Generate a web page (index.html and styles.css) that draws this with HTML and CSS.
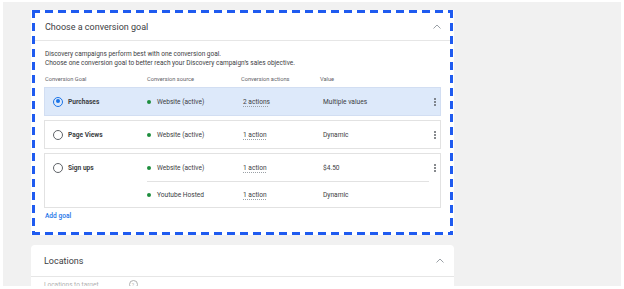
FILE: index.html
```html
<!DOCTYPE html>
<html>
<head>
<meta charset="utf-8">
<link rel="stylesheet" href="styles.css">
</head>
<body>
<div class="frame">
  <section class="card goal-card">
    <header class="card-head">
      <span class="card-title">Choose a conversion goal</span>
      <svg class="chev" width="8" height="5" viewBox="0 0 8 5"><path d="M0.5 4.5 L4 1 L7.5 4.5" fill="none" stroke="#9aa0a6" stroke-width="1"/></svg>
    </header>
    <div class="card-body">
      <p class="desc">Discovery campaigns perform best with one conversion goal.<br>Choose one conversion goal to better reach your Discovery campaign’s sales objective.</p>
      <div class="cols">
        <span class="c-goal">Conversion Goal</span>
        <span class="c-src">Conversion source</span>
        <span class="c-act">Conversion actions</span>
        <span class="c-val">Value</span>
      </div>
      <div class="rows">
        <div class="row selected">
          <div class="goal"><span class="radio on"></span><span class="gname">Purchases</span></div>
          <div class="subs">
            <div class="sub"><span class="src"><i class="dot"></i>Website (active)</span><span class="act"><u>2 actions</u></span><span class="val">Multiple values</span></div>
          </div>
          <div class="kebab"><i></i><i></i><i></i></div>
        </div>
        <div class="row">
          <div class="goal"><span class="radio"></span><span class="gname">Page Views</span></div>
          <div class="subs">
            <div class="sub"><span class="src"><i class="dot"></i>Website (active)</span><span class="act"><u>1 action</u></span><span class="val">Dynamic</span></div>
          </div>
          <div class="kebab"><i></i><i></i><i></i></div>
        </div>
        <div class="row">
          <div class="goal"><span class="radio"></span><span class="gname">Sign ups</span></div>
          <div class="subs">
            <div class="sub"><span class="src"><i class="dot"></i>Website (active)</span><span class="act"><u>1 action</u></span><span class="val">$4.50</span></div>
            <div class="sub"><span class="src"><i class="dot"></i>Youtube Hosted</span><span class="act"><u>1 action</u></span><span class="val">Dynamic</span></div>
          </div>
          <div class="kebab"><i></i><i></i><i></i></div>
        </div>
      </div>
      <a class="add">Add goal</a>
    </div>
  </section>
  <section class="card loc-card">
    <header class="card-head loc-head">
      <span class="card-title">Locations</span>
      <svg class="chev" width="8" height="5" viewBox="0 0 8 5"><path d="M0.5 4.5 L4 1 L7.5 4.5" fill="none" stroke="#9aa0a6" stroke-width="1"/></svg>
    </header>
    <div class="loc-body"><span>Locations to target</span><span class="help">?</span></div>
  </section>
</div>
</body>
</html>
```
FILE: styles.css
```css
html, body { margin: 0; padding: 0; background: #fff; }
body { font-family: Roboto, "Liberation Sans", sans-serif; color: #3c4043; }
.frame {
  margin: 2px 3px 0;
  width: 618px;
  height: 284px;
  box-sizing: border-box;
  padding: 8px 0 0 28px;
  background: #f1f1f1;
  overflow: hidden;
}
.card { width: 423px; background: #fff; box-sizing: border-box; }
.goal-card { position: relative; border: 3px solid #fff; }
.goal-card::before {
  content: "";
  position: absolute;
  inset: -3px -2px -3px -2px;
  pointer-events: none;
  background:
    repeating-linear-gradient(90deg, #1f5bf0 0 8px, transparent 8px 13px) left top / 100% 3px no-repeat,
    repeating-linear-gradient(90deg, #1f5bf0 0 8px, transparent 8px 13px) left bottom / 100% 3px no-repeat,
    repeating-linear-gradient(180deg, #1f5bf0 0 8px, transparent 8px 13px) left top / 3px 100% no-repeat,
    repeating-linear-gradient(180deg, #1f5bf0 0 8px, transparent 8px 13px) right top / 3px 100% no-repeat;
}
.card-head {
  height: 27px;
  display: flex;
  align-items: center;
  justify-content: space-between;
  padding: 0 10px 0 11px;
  border-bottom: 1px solid #e6e6e6;
}
.card-title { font-size: 9px; color: #3c4043; }
.chev { display: block; }
.card-body { padding: 0 10px 11px; }
.desc { margin: 9px 0 0 1px; font-size: 6.5px; line-height: 9px; color: #3c4043; }
.cols { display: flex; margin-top: 7px; font-size: 5.7px; line-height: 8px; color: #5f6368; }
.cols .c-goal { width: 102px; padding-left: 1px; }
.cols .c-src { width: 94px; }
.cols .c-act { width: 79px; }
.rows { display: flex; flex-direction: column; gap: 4px; margin-top: 4px; }
.row {
  display: flex;
  border: 1px solid #e2e2e2;
  font-size: 6.6px;
}
.row.selected { background: #dde9fa; border-color: #d2def2; }
.goal { width: 102px; height: 27px; display: flex; align-items: center; padding-left: 8px; box-sizing: border-box; gap: 5px; }
.gname { font-weight: 700; color: #3c4043; }
.radio { width: 10px; height: 10px; box-sizing: border-box; border: 1.4px solid #5f6368; border-radius: 50%; position: relative; }
.radio.on { border-color: #1a73e8; }
.radio.on::after { content: ""; position: absolute; left: 1.6px; top: 1.6px; width: 4px; height: 4px; border-radius: 50%; background: #1a73e8; }
.subs { width: 282px; display: flex; flex-direction: column; }
.sub { height: 27px; display: flex; align-items: center; }
.sub + .sub { height: 25px; border-top: 1px solid #e2e2e2; }
.src { width: 94px; display: flex; align-items: center; gap: 6px; }
.dot { width: 4px; height: 4px; border-radius: 50%; background: #1e8e3e; }
.act { width: 79px; padding-left: 2px; box-sizing: border-box; }
.act u { text-decoration: underline dotted #9aa0a6; text-underline-offset: 2px; }
.val { padding-left: 3px; }
.kebab { width: 11px; height: 27px; display: flex; flex-direction: column; align-items: center; justify-content: center; gap: 1px; }
.kebab i { width: 2px; height: 2px; border-radius: 50%; background: #5f6368; }
.add { display: block; margin-top: 4px; margin-left: 1px; font-size: 6.6px; line-height: 9px; color: #1a73e8; font-weight: 500; }
.loc-card { margin-top: 10px; border-radius: 4px 4px 0 0; height: 60px; }
.loc-head { height: 31px; padding: 0 10px 0 13px; }
.loc-body { display: flex; align-items: center; gap: 30px; padding: 3px 0 0 13px; font-size: 6.5px; line-height: 8px; color: #b0b0b0; }
.help { width: 7px; height: 7px; border: 1px solid #b0b0b0; border-radius: 50%; font-size: 5px; display: flex; align-items: center; justify-content: center; }
```
